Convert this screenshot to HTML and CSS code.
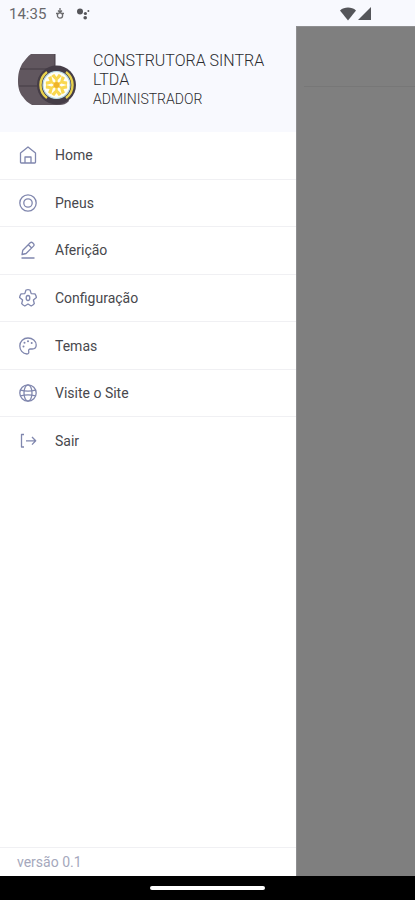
FILE: index.html
```html
<!DOCTYPE html>
<html lang="pt-BR">
<head>
  <meta charset="UTF-8">
  <meta name="viewport" content="width=device-width, initial-scale=1.0">
  <title>Menu</title>
  <link rel="stylesheet" href="styles.css">
</head>
<body>
  <!-- Status bar -->
  <div class="status-bar">
    <span class="clock">14:35</span>
    <svg class="status-icon" width="10" height="14" viewBox="0 0 10 14" fill="none" stroke="#6b6b6e" stroke-width="1.3">
      <circle cx="5" cy="8.5" r="2.6"/>
      <path d="M5 1v5M3 3.5l2 2 2-2M1 6.5h2M7 6.5h2"/>
    </svg>
    <svg class="status-icon" width="14" height="14" viewBox="0 0 14 14" fill="#55555a">
      <circle cx="4" cy="4.5" r="3"/>
      <circle cx="9.4" cy="6.5" r="1.6"/>
      <circle cx="9.2" cy="10.8" r="1.8"/>
      <circle cx="12.4" cy="4" r="1"/>
    </svg>
    <div class="signal">
      <svg width="16" height="14" viewBox="0 0 16 14" fill="#55565a"><path d="M0 3.4C4.5-.3 11.5-.3 16 3.4L8 13.4z"/></svg>
      <svg width="13" height="13" viewBox="0 0 13 13" fill="#55565a"><path d="M13 0v13H0z"/></svg>
    </div>
  </div>

  <div class="screen">
    <div class="drawer">
      <div class="profile">
        <svg class="logo" width="60" height="52" viewBox="0 0 60 52">
          <path d="M14 0h24v14l14 33c-3 3-6 4-9 4H15C11 49 8 46 6 43 3 40 1 34 1 28c0-8 1-12 4-18 3-4 6-8 9-10z" fill="#61575f"/>
          <path d="M3 15h33M2 32h20" stroke="#453d45" stroke-width="1"/>
          <path d="M38 0v14" stroke="#453d45"/>
          <circle cx="39.5" cy="31" r="19.5" fill="#453d47"/>
          <g fill="none" stroke="#e8d24d" stroke-width="2.4">
            <path d="M30 18a16.2 16.2 0 0 0 0 26"/>
            <path d="M49 18a16.2 16.2 0 0 1 0 26"/>
          </g>
          <circle cx="39.5" cy="31" r="13.5" fill="#fffef4" stroke="#b9dce8" stroke-width="1.2"/>
          <g fill="#f9d84f">
            <path id="spoke" d="M38.3 31v-5l-4-4c1-1 2-1.600 3-2l2.200 3 2.200-3c1 .4 2 1 3 2l-4 4v5z"/>
            <use href="#spoke" transform="rotate(60 39.5 31)"/>
            <use href="#spoke" transform="rotate(120 39.5 31)"/>
            <use href="#spoke" transform="rotate(180 39.5 31)"/>
            <use href="#spoke" transform="rotate(240 39.5 31)"/>
            <use href="#spoke" transform="rotate(300 39.5 31)"/>
          </g>
          <circle cx="39.5" cy="31" r="3" fill="#f0b429"/>
        </svg>
        <div class="profile-text">
          <h1>CONSTRUTORA SINTRA LTDA</h1>
          <p>ADMINISTRADOR</p>
        </div>
      </div>

      <nav class="menu">
        <a href="#home">
          <svg class="icon" viewBox="0 0 18 18"><path d="M1.5 7L9 1l7.5 6v9.2c0 .5-.3.8-.8.8H2.3c-.5 0-.8-.3-.8-.8zM6 17v-6h6v6"/></svg>
          Home
        </a>
        <a href="#pneus">
          <svg class="icon" viewBox="0 0 18 18"><circle cx="9" cy="9" r="8.2"/><circle cx="9" cy="9" r="4.2"/></svg>
          Pneus
        </a>
        <a href="#afericao">
          <svg class="icon" viewBox="0 0 18 18"><path d="M3 13.5l.8-4.3 7.4-7.4c.8-.8 1.6-.8 2.4 0l.9.9c.8.8.8 1.6 0 2.4l-7.4 7.4zM9.4 3.8l3 3M2.5 17h13"/></svg>
          Aferição
        </a>
        <a href="#configuracao">
          <svg class="icon" viewBox="0 0 18 18"><path d="M7 1Q9 .4 11 1L12.2 4.6L16 4.8Q17.2 6.500 17.4 8.5L14.4 11L15.300 14.700Q14 16.400 12.200 17L9 15L5.800 17Q4 16.400 2.700 14.700L3.600 11L.6 8.500Q.8 6.500 2 4.800L5.800 4.600z"/><ellipse cx="9" cy="9" rx="1.800" ry="2.500"/></svg>
          Configuração
        </a>
        <a href="#temas">
          <svg class="icon" viewBox="0 0 18 18"><path d="M8 17C3.5 16.5.8 13 .8 9 .8 4.5 4.5 1 9 1s8.2 3 8.2 7c0 2.5-1.7 4-4 4h-1.7c-1.5 0-2.2 1-1.8 2.3.4 1.5-.2 2.7-1.7 2.7z"/><g class="dots"><circle cx="4.5" cy="9.5" r="1"/><circle cx="5.5" cy="5.8" r="1"/><circle cx="9" cy="4.2" r="1"/><circle cx="12.7" cy="6" r="1"/></g></svg>
          Temas
        </a>
        <a href="#site">
          <svg class="icon" viewBox="0 0 18 18"><circle cx="9" cy="9" r="8.2"/><ellipse cx="9" cy="9" rx="4" ry="8.2"/><path d="M1.5 6.2Q9 8 16.5 6.2M1.5 11.8Q9 10 16.5 11.8"/></svg>
          Visite o Site
        </a>
        <a href="#sair">
          <svg class="icon" viewBox="0 0 18 18"><path d="M5 2.5H2.5V15H5M7 8.8h9.5M13 5l3.7 3.8-3.7 3.8"/></svg>
          Sair
        </a>
      </nav>

      <footer class="version">versão 0.1</footer>
    </div>

    <!-- Dimmed page behind the drawer -->
    <div class="overlay">
      <div class="overlay-header"></div>
    </div>
  </div>

  <div class="nav-bar"><span class="handle"></span></div>
</body>
</html>
```
FILE: styles.css
```css
* {
  margin: 0;
  padding: 0;
  box-sizing: border-box;
}

body {
  font-family: Roboto, Arial, sans-serif;
  background-color: #f8f9fe;
  color: #48484d;
  display: flex;
  flex-direction: column;
  height: 100vh;
}

.status-bar {
  display: flex;
  align-items: center;
  height: 26px;
  padding: 1px 44px 0 9px;
}

.clock {
  font-size: 15px;
  color: #68686c;
}

.status-icon {
  margin-left: 9px;
}

.status-icon + .status-icon {
  margin-left: 11px;
}

.signal {
  display: flex;
  align-items: center;
  gap: 2px;
  margin-left: auto;
}

.screen {
  flex: 1;
  display: flex;
}

.drawer {
  flex: 0 0 296px;
  display: flex;
  flex-direction: column;
  background-color: #fff;
}

.profile {
  display: flex;
  align-items: center;
  gap: 16px;
  height: 106px;
  padding: 2px 17px 0;
  background-color: #f8f9fe;
}

.logo {
  flex: none;
}

.profile h1 {
  font-size: 16px;
  font-weight: 300;
  line-height: 19px;
  color: #2c2c30;
}

.profile p {
  font-size: 14px;
  font-weight: 300;
  line-height: 20px;
  color: #2c2c30;
}

.menu {
  display: grid;
  grid-auto-rows: 1fr;
  min-height: 333px;
}

.menu a {
  display: flex;
  align-items: center;
  gap: 18px;
  padding: 0 19px;
  border-bottom: 1px solid #f0f0f3;
  font-size: 14px;
  color: #48484d;
  text-decoration: none;
}

.menu a:last-child {
  border-bottom: none;
}

.icon {
  width: 18px;
  height: 18px;
  fill: none;
  stroke: #8087ae;
  stroke-width: 1.3;
  stroke-linejoin: round;
}

.dots {
  fill: #8087ae;
  stroke: none;
}

.version {
  margin-top: auto;
  padding: 4px 17px;
  border-top: 1px solid #f0f0f3;
  font-size: 14px;
  line-height: 20px;
  color: #a5a8bc;
}

.overlay {
  flex: 1;
  border-top: 1px solid #8f8f91;
  border-left: 1px solid #8f8f91;
  background-color: #7f7f7f;
}

.overlay-header {
  height: 60px;
  margin-left: 7px;
  border-bottom: 1px solid #777;
}

.nav-bar {
  display: flex;
  align-items: center;
  justify-content: center;
  height: 24px;
  background-color: #000;
}

.handle {
  width: 115px;
  height: 4px;
  border-radius: 2px;
  background-color: #fff;
}
```
